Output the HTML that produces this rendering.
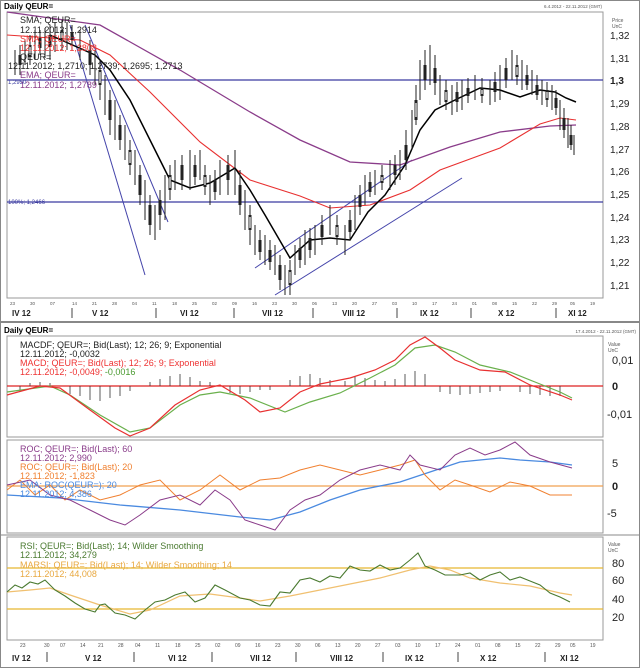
<!DOCTYPE html>
<html><head><style>
body{margin:0;background:#fff;width:640px;height:668px;overflow:hidden;font-family:"Liberation Sans",sans-serif}
svg{display:block}
text{font-family:"Liberation Sans",sans-serif}
</style></head><body>
<svg width="640" height="668" viewBox="0 0 640 668">
<rect width="640" height="668" fill="#fff"/>
<rect x="0" y="0" width="640" height="668" fill="none" stroke="#888" stroke-width="2"/>
<text x="4" y="9" font-size="8" font-weight="bold">Daily QEUR=</text>
<text x="602" y="8" font-size="4.5" fill="#555" text-anchor="end">6.4.2012 - 22.11.2012 (GMT)</text>
<rect x="7" y="12" width="596" height="286" fill="none" stroke="#999"/>
<line x1="7" y1="80" x2="603" y2="80" stroke="#3b3ba0" stroke-width="1.2"/>
<line x1="7" y1="202" x2="603" y2="202" stroke="#3b3ba0" stroke-width="1.2"/>
<line x1="70" y1="25" x2="145" y2="275" stroke="#4444aa"/>
<line x1="85" y1="25" x2="168" y2="222" stroke="#4444aa"/>
<line x1="275" y1="295" x2="462" y2="178" stroke="#4444aa"/>
<line x1="255" y1="268" x2="412" y2="160" stroke="#4444aa"/>
<polyline fill="none" stroke="#8a3c8a" stroke-width="1.3" points="7,12 100,25 180,70 250,112 300,140 350,162 400,165 450,147 500,132 550,126 576,125"/>
<polyline fill="none" stroke="#e83030" stroke-width="1.1" points="7,35 80,40 110,55 150,92 200,142 250,180 300,196 330,208 370,205 410,190 440,170 500,148 540,124 560,118 576,120"/>
<g stroke="#222" stroke-width="1" fill="none">
<polyline stroke="#000" stroke-width="1.5" points="50,35 95,55 110,70 130,100 150,140 170,180 190,188 210,183 235,168 250,190 265,215 290,258 310,240 330,238 350,240 368,212 385,195 405,165 420,130 435,110 455,100 480,88 500,90 520,97 540,90 555,92 566,98 576,102"/>
</g>
<g stroke="#222" stroke-width="1">
<path d="M15,50v25M20,45v30M25,40v25M30,35v30M35,30v30M40,30v25M45,28v30M50,25v35M55,22v30M62,20v30M67,22v28M72,25v25M80,30v30M90,40v35M95,50v35M100,60v40M105,75v40M110,90v45M115,100v40M120,115v35M125,125v35M130,140v35M135,150v35M140,165v40M145,180v40M150,195v40M155,205v35M160,190v40M165,175v45M170,165v35M175,160v30M182,155v35M190,150v40M195,155v30M200,150v30M205,165v30M210,175v30M215,170v30M220,160v35M228,155v40M235,150v45M240,170v45M245,190v40M250,205v40M255,225v30M260,230v30M265,235v30M270,240v30M275,245v30M280,255v35M285,265v30M290,260v35M295,245v30M300,238v30M305,230v35M310,228v30M315,225v30M322,215v30M330,205v30M337,215v30M345,225v30M350,210v30M355,195v35M360,185v30M365,175v30M370,172v25M375,170v25M382,165v25M390,160v30M395,155v30M400,150v30M406,130v40M412,110v40M416,85v40M420,60v40M425,50v40M430,45v40M435,55v40M440,75v30M446,80v30M452,85v30M457,82v30M462,80v30M468,78v25M475,75v25M482,78v25M490,80v25M495,72v30M500,65v35M506,58v30M512,50v30M517,55v30M522,60v30M527,65v25M532,70v25M537,75v25M542,80v25M547,82v25M552,85v25M556,90v25M560,100v30M564,108v30M568,118v30M571,125v25M574,135v20"/>
</g>
<g stroke="#222" stroke-width="3">
<path d="M20,55v10M30,45v12M40,38v10M50,35v12M62,30v10M72,32v8M90,50v15M100,70v15M110,100v20M120,125v15M130,150v15M140,175v20M150,205v20M160,200v15M170,175v15M182,165v15M195,165v12M205,175v12M215,180v12M228,165v15M240,185v20M250,215v15M260,240v12M270,250v12M280,265v15M290,270v15M300,248v12M310,238v12M322,225v12M337,225v12M350,220v12M360,195v12M370,182v10M382,175v8M395,165v10M406,145v15M416,100v20M425,65v15M435,68v15M446,90v12M457,92v10M468,88v8M482,88v8M495,82v10M506,68v12M517,65v12M527,75v10M537,85v10M547,90v10M556,98v10M564,118v12M571,135v10"/>
</g>
<g stroke="#fff" stroke-width="1.2">
<path d="M30,47v8M62,32v6M100,72v11M130,152v11M170,177v11M205,177v8M250,217v11M290,272v11M337,227v8M382,177v4M416,103v14M446,92v8M482,90v4M517,67v8M547,92v6"/>
</g>
<text x="20" y="23" font-size="9" fill="#222">SMA; QEUR=</text>
<text x="20" y="33" font-size="9" fill="#222">12.11.2012; 1,2914</text>
<text x="20" y="42" font-size="9" fill="#e33">SMA; QEUR=</text>
<text x="20" y="51" font-size="9" fill="#e33">12.11.2012; 1,2808</text>
<text x="20" y="60" font-size="9" fill="#222">QEUR=</text>
<text x="8" y="69" font-size="9" fill="#222">12.11.2012; 1,2710; 1,2739; 1,2695; 1,2713</text>
<text x="20" y="78" font-size="9" fill="#8a3c8a">EMA; QEUR=</text>
<text x="20" y="88" font-size="9" fill="#8a3c8a">12.11.2012; 1,2789</text>
<text x="8" y="84" font-size="6" fill="#3b3ba0">1,2950</text>
<text x="8" y="204" font-size="6" fill="#3b3ba0">100%; 1,2466</text>
<g font-size="10" fill="#222">
<text x="610" y="39">1,32</text><text x="610" y="62">1,31</text><text x="610" y="84" font-weight="bold">1,3</text><text x="610" y="107">1,29</text><text x="610" y="130">1,28</text><text x="610" y="153">1,27</text><text x="610" y="175">1,26</text><text x="610" y="198">1,25</text><text x="610" y="221">1,24</text><text x="610" y="243">1,23</text><text x="610" y="266">1,22</text><text x="610" y="289">1,21</text>
</g>
<text x="612" y="22" font-size="5" fill="#555">Price</text><text x="612" y="28" font-size="5" fill="#555">UnC</text>
<g font-size="4.5" fill="#555">
<text x="10" y="305">23</text><text x="30" y="305">30</text><text x="50" y="305">07</text><text x="72" y="305">14</text><text x="92" y="305">21</text><text x="112" y="305">28</text><text x="132" y="305">04</text><text x="152" y="305">11</text><text x="172" y="305">18</text><text x="192" y="305">25</text><text x="212" y="305">02</text><text x="232" y="305">09</text><text x="252" y="305">16</text><text x="272" y="305">23</text><text x="292" y="305">30</text><text x="312" y="305">06</text><text x="332" y="305">13</text><text x="352" y="305">20</text><text x="372" y="305">27</text><text x="392" y="305">03</text><text x="412" y="305">10</text><text x="432" y="305">17</text><text x="452" y="305">24</text><text x="472" y="305">01</text><text x="492" y="305">08</text><text x="512" y="305">15</text><text x="532" y="305">22</text><text x="552" y="305">29</text><text x="570" y="305">05</text><text x="590" y="305">19</text>
</g>
<g font-size="8" font-weight="bold" fill="#222">
<text x="12" y="316">IV 12</text><text x="92" y="316">V 12</text><text x="180" y="316">VI 12</text><text x="262" y="316">VII 12</text><text x="342" y="316">VIII 12</text><text x="420" y="316">IX 12</text><text x="498" y="316">X 12</text><text x="568" y="316">XI 12</text>
</g>
<g stroke="#444"><path d="M72,308v10M156,308v10M234,308v10M313,308v10M397,308v10M471,308v10M556,308v10"/></g>
<line x1="0" y1="322" x2="640" y2="322" stroke="#888" stroke-width="2"/>
<text x="4" y="333" font-size="8" font-weight="bold">Daily QEUR=</text>
<text x="636" y="333" font-size="4.5" fill="#555" text-anchor="end">17.4.2012 - 22.11.2012 (GMT)</text>
<rect x="7" y="336" width="596" height="101" fill="none" stroke="#999"/>
<line x1="7" y1="386" x2="603" y2="386" stroke="#d22" stroke-width="1.2"/>
<g stroke="#333" stroke-width="0.8"><path d="M20,386v5M30,386v-3M40,386v-4M50,386v-3M70,386v8M80,386v10M90,386v14M100,386v15M110,386v12M120,386v10M130,386v5M150,386v-4M160,386v-7M170,386v-10M180,386v-12M190,386v-9M200,386v-5M210,386v-4M230,386v7M240,386v8M250,386v6M260,386v4M270,386v4M290,386v-6M300,386v-10M310,386v-12M320,386v-8M330,386v-6M345,386v-5M355,386v-10M365,386v-8M375,386v-6M385,386v-5M395,386v-7M405,386v-12M415,386v-15M425,386v-12M440,386v6M450,386v8M460,386v9M470,386v8M480,386v7M490,386v6M500,386v5M520,386v6M530,386v8M540,386v9M550,386v10M560,386v10"/></g>
<polyline fill="none" stroke="#6ab04c" stroke-width="1.2" points="7,392 50,386 70,395 100,415 130,432 150,428 180,405 200,395 220,392 250,398 285,412 310,402 340,393 370,378 395,365 415,348 435,345 455,352 480,365 510,372 535,382 560,392 572,398"/>
<polyline fill="none" stroke="#e83030" stroke-width="1.2" points="7,395 40,386 60,388 90,410 115,428 130,436 150,428 175,405 200,390 220,385 245,400 260,412 280,408 300,392 320,384 350,378 375,370 395,360 410,345 425,337 440,348 455,360 480,370 505,372 530,385 560,395 572,400"/>
<text x="20" y="348" font-size="9" fill="#222">MACDF; QEUR=; Bid(Last);  12; 26; 9; Exponential</text>
<text x="20" y="357" font-size="9" fill="#222">12.11.2012; -0,0032</text>
<text x="20" y="366" font-size="9" fill="#e33">MACD; QEUR=; Bid(Last);  12; 26; 9; Exponential</text>
<text x="20" y="375" font-size="9" fill="#e33">12.11.2012; -0,0049; <tspan fill="#4a9a30">-0,0016</tspan></text>
<g font-size="11" fill="#222"><text x="612" y="364">0,01</text><text x="612" y="390" font-weight="bold">0</text><text x="607" y="418">-0,01</text></g>
<text x="608" y="346" font-size="5" fill="#555">Value</text><text x="608" y="352" font-size="5" fill="#555">UnC</text>
<rect x="7" y="440" width="596" height="93" fill="none" stroke="#999"/>
<line x1="7" y1="486" x2="603" y2="486" stroke="#f0a050" stroke-width="1.2"/>
<polyline fill="none" stroke="#4a8ae0" stroke-width="1.3" points="7,495 60,498 120,505 180,510 240,517 270,520 300,512 330,500 360,490 400,482 430,472 460,462 500,458 520,460 550,462 572,465"/>
<polyline fill="none" stroke="#f08030" stroke-width="1" points="7,490 20,480 35,495 50,485 65,500 80,490 100,500 120,495 140,485 160,480 180,500 200,490 220,475 240,490 260,480 280,478 300,470 320,465 340,470 360,475 380,470 400,465 415,460 425,475 440,490 455,480 470,485 490,492 510,482 530,486 550,495 572,495"/>
<polyline fill="none" stroke="#8a3c8a" stroke-width="1" points="7,485 30,480 50,495 70,500 90,510 110,520 125,525 140,515 160,500 180,495 200,505 215,490 230,500 245,520 260,525 275,530 290,510 305,500 320,495 340,480 360,470 380,465 400,470 410,455 420,465 440,470 455,455 470,448 485,455 500,450 515,442 530,455 550,462 572,468"/>
<text x="20" y="452" font-size="9" fill="#8a3c8a">ROC; QEUR=; Bid(Last); 60</text>
<text x="20" y="461" font-size="9" fill="#8a3c8a">12.11.2012; 2,990</text>
<text x="20" y="470" font-size="9" fill="#f08030">ROC; QEUR=; Bid(Last); 20</text>
<text x="20" y="479" font-size="9" fill="#f08030">12.11.2012; -1,823</text>
<text x="20" y="488" font-size="9" fill="#4a8ae0">EMA; ROC(QEUR=); 20</text>
<text x="20" y="497" font-size="9" fill="#4a8ae0">12.11.2012; 4,386</text>
<g font-size="11" fill="#222"><text x="612" y="467">5</text><text x="612" y="490" font-weight="bold">0</text><text x="607" y="517">-5</text></g>
<line x1="0" y1="535" x2="640" y2="535" stroke="#888" stroke-width="1"/>
<rect x="7" y="537" width="596" height="103" fill="none" stroke="#999"/>
<line x1="7" y1="568" x2="603" y2="568" stroke="#e8b830" stroke-width="1.2"/>
<line x1="7" y1="609" x2="603" y2="609" stroke="#e8b830" stroke-width="1.2"/>
<polyline fill="none" stroke="#f0c070" stroke-width="1.2" points="7,592 30,590 50,588 70,595 100,605 130,614 150,610 180,596 210,594 240,598 260,601 290,596 320,590 350,584 380,578 410,570 430,566 450,570 470,578 500,583 530,586 560,593 572,595"/>
<polyline fill="none" stroke="#4a7a30" stroke-width="1.1" points="7,592 15,585 22,588 30,582 38,584 45,580 55,590 65,596 75,603 85,609 95,612 100,605 105,604 115,613 125,615 135,619 145,610 155,602 165,600 175,595 185,592 195,602 205,598 215,585 225,590 240,598 250,600 260,605 270,606 280,592 290,593 300,580 310,578 320,582 330,576 340,578 350,566 360,570 370,571 380,565 390,570 400,568 410,560 418,553 425,566 435,570 445,575 460,575 470,573 480,580 490,575 500,572 510,580 520,577 530,581 540,585 550,593 560,597 570,602"/>
<text x="20" y="549" font-size="9" fill="#4a7a30">RSI; QEUR=; Bid(Last);  14; Wilder Smoothing</text>
<text x="20" y="558" font-size="9" fill="#4a7a30">12.11.2012; 34,279</text>
<text x="20" y="568" font-size="9" fill="#e8a840">MARSI; QEUR=; Bid(Last);  14; Wilder Smoothing; 14</text>
<text x="20" y="577" font-size="9" fill="#e8a840">12.11.2012; 44,008</text>
<g font-size="11" fill="#222"><text x="612" y="567">80</text><text x="612" y="584">60</text><text x="612" y="603">40</text><text x="612" y="621">20</text></g>
<text x="608" y="546" font-size="5" fill="#555">Value</text><text x="608" y="552" font-size="5" fill="#555">UnC</text>
<g font-size="5" fill="#555">
<text x="20" y="647">23</text><text x="44" y="647">30</text><text x="60" y="647">07</text><text x="80" y="647">14</text><text x="98" y="647">21</text><text x="118" y="647">28</text><text x="135" y="647">04</text><text x="155" y="647">11</text><text x="175" y="647">18</text><text x="195" y="647">25</text><text x="215" y="647">02</text><text x="235" y="647">09</text><text x="255" y="647">16</text><text x="275" y="647">23</text><text x="295" y="647">30</text><text x="315" y="647">06</text><text x="335" y="647">13</text><text x="355" y="647">20</text><text x="375" y="647">27</text><text x="395" y="647">03</text><text x="415" y="647">10</text><text x="435" y="647">17</text><text x="455" y="647">24</text><text x="475" y="647">01</text><text x="495" y="647">08</text><text x="515" y="647">15</text><text x="535" y="647">22</text><text x="555" y="647">29</text><text x="570" y="647">05</text><text x="590" y="647">19</text>
</g>
<g font-size="8" font-weight="bold" fill="#222">
<text x="12" y="661">IV 12</text><text x="85" y="661">V 12</text><text x="168" y="661">VI 12</text><text x="250" y="661">VII 12</text><text x="330" y="661">VIII 12</text><text x="405" y="661">IX 12</text><text x="480" y="661">X 12</text><text x="560" y="661">XI 12</text>
</g>
<g stroke="#444"><path d="M47,652v10M134,652v10M212,652v10M296,652v10M383,652v10M458,652v10M545,652v10"/></g>
</svg>
</body></html>
